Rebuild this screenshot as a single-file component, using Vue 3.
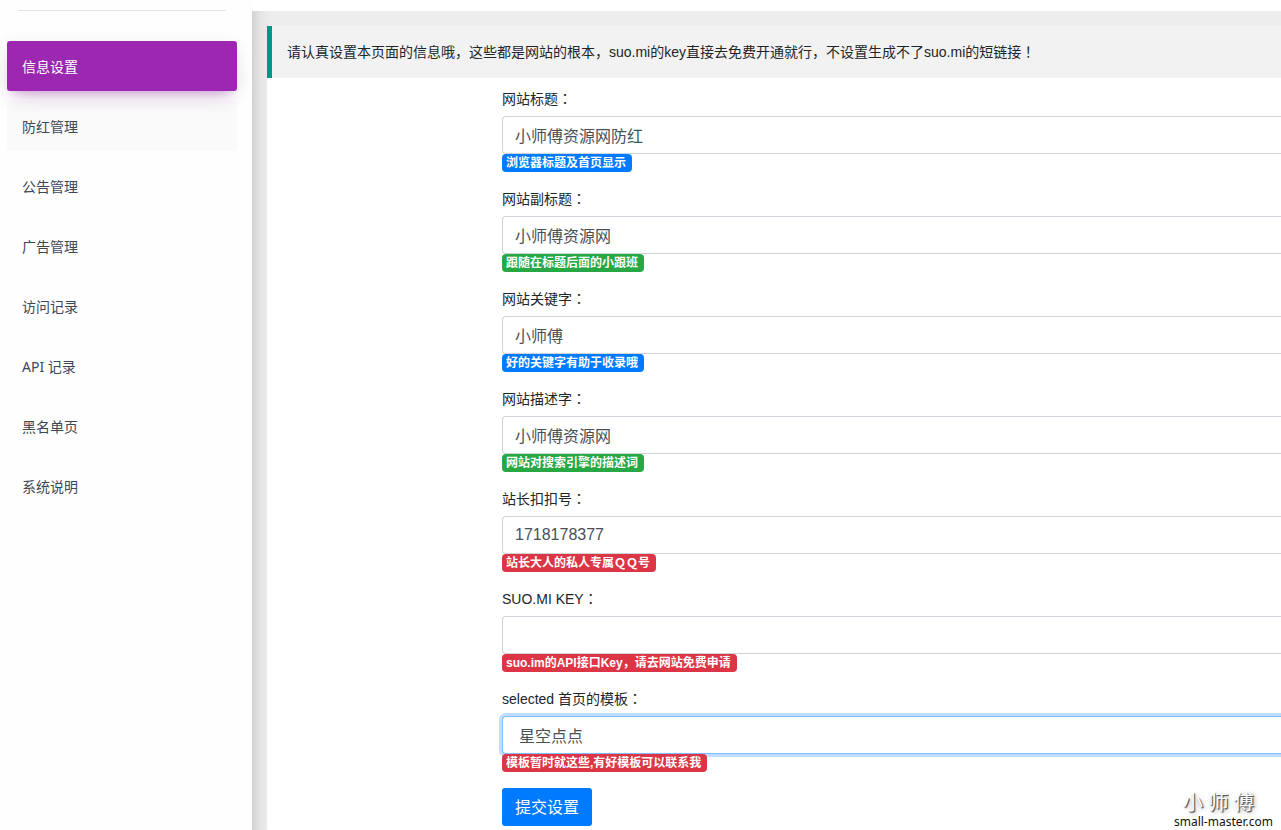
<script setup>
import { ref } from 'vue'

const menu = ['信息设置', '防红管理', '公告管理', '广告管理', '访问记录', 'API 记录', '黑名单页', '系统说明']

const fields = ref([
  { id: 'title', label: '网站标题', value: '小师傅资源网防红', hint: '浏览器标题及首页显示', tone: 'primary' },
  { id: 'subtitle', label: '网站副标题', value: '小师傅资源网', hint: '跟随在标题后面的小跟班', tone: 'success' },
  { id: 'keywords', label: '网站关键字', value: '小师傅', hint: '好的关键字有助于收录哦', tone: 'primary' },
  { id: 'description', label: '网站描述字', value: '小师傅资源网', hint: '网站对搜索引擎的描述词', tone: 'success' },
  { id: 'qq', label: '站长扣扣号', value: '1718178377', hint: '站长大人的私人专属ＱＱ号', tone: 'danger' },
  { id: 'key', label: 'SUO.MI KEY', value: '', hint: 'suo.im的API接口Key，请去网站免费申请', tone: 'danger' }
])
const template = ref('star')
</script>

<template>
  <div class="page">
    <aside class="sidebar">
      <nav class="menu">
        <a
          v-for="(item, i) in menu"
          :key="item"
          href="#"
          class="menu-item"
          :class="{ active: i === 0, hovered: i === 1 }"
        >{{ item }}</a>
      </nav>
    </aside>
    <main class="main">
      <p class="notice">请认真设置本页面的信息哦，这些都是网站的根本，suo.mi的key直接去免费开通就行，不设置生成不了suo.mi的短链接<span class="mark">！</span></p>
      <form class="form" @submit.prevent>
        <div v-for="f in fields" :key="f.id" class="group">
          <label :for="f.id">{{ f.label }}<span class="mark">：</span></label>
          <input :id="f.id" v-model="f.value" type="text" class="control" />
          <span class="badge" :class="f.tone">{{ f.hint }}</span>
        </div>
        <div class="group">
          <label for="template">selected 首页的模板<span class="mark">：</span></label>
          <select id="template" v-model="template" class="control picker">
            <option value="star">星空点点</option>
          </select>
          <span class="badge danger">模板暂时就这些,有好模板可以联系我</span>
        </div>
        <button type="submit" class="submit">提交设置</button>
      </form>
    </main>
    <div class="watermark">
      <span class="brand">小 师 傅</span>
      <span class="site">small-master.com</span>
    </div>
  </div>
</template>

<style>
body {
  margin: 0;
}
</style>

<style scoped>
* {
  box-sizing: border-box;
}
.page {
  position: relative;
  display: flex;
  min-height: 100vh;
  overflow: hidden;
  background: #fff;
  color: #212529;
  font: 14px/22px "Liberation Sans", "Noto Sans CJK SC", sans-serif;
}
.sidebar {
  position: relative;
  z-index: 1;
  flex: none;
  width: 252px;
  padding-top: 10px;
  background: #fefefe;
}
.menu {
  display: flex;
  flex-direction: column;
  gap: 10px;
  padding: 0 15px 0 7px;
  font-family: "Noto Sans", "Noto Sans CJK SC", sans-serif;
}
.menu::before {
  content: "";
  height: 1px;
  margin: 0 11px 20px;
  background: #e4e4e4;
}
.menu-item {
  height: 50px;
  padding: 0 15px;
  border-radius: 3px;
  color: #3c4858;
  line-height: 52px;
  text-decoration: none;
}
.menu-item.active {
  position: relative;
  background: #9c27b0;
  color: #fff;
  box-shadow: 0 12px 20px -10px rgba(156, 39, 176, 0.28), 0 4px 20px 0 rgba(0, 0, 0, 0.08), 0 7px 8px -5px rgba(156, 39, 176, 0.2);
}
.menu-item.hovered {
  background: #fafafa;
}
.main {
  flex: 1;
  min-width: 0;
  margin-top: 11px;
  padding: 15px 0 0 15px;
  background: linear-gradient(to right, #d2d2d2, #e6e6e6 9px, #ededed 20px);
}
.notice {
  margin: 0;
  padding: 15px;
  border-left: 5px solid #009688;
  background: #f2f2f2;
}
.form {
  min-height: calc(100vh - 78px);
  padding: 10px 0 4px 235px;
  background: #fff;
}
.mark {
  font-family: "Noto Sans CJK JP", sans-serif;
  line-height: 1;
}
.group {
  display: flex;
  flex-direction: column;
  align-items: flex-start;
  margin-bottom: 16px;
}
label {
  margin-bottom: 6px;
}
.control {
  width: 100%;
  height: 38px;
  padding: 0 12px;
  border: 1px solid #ced4da;
  border-right: 0;
  border-radius: 4px 0 0 4px;
  outline: 0;
  background: #fff;
  color: #495057;
  font: 16px/24px "Liberation Sans", "Noto Sans CJK SC", sans-serif;
}
.picker {
  appearance: none;
  padding: 3px 16px 0;
  border-color: #80bdff;
  box-shadow: 0 0 0 3px rgba(0, 123, 255, 0.25);
}
.badge {
  z-index: 1;
  height: 18px;
  padding: 0 6px 0 4px;
  border-radius: 4px;
  color: #fff;
  font-size: 12px;
  font-weight: 700;
  line-height: 18px;
  white-space: nowrap;
}
.primary {
  background: #007bff;
}
.success {
  background: #28a745;
}
.danger {
  background: #dc3545;
}
.submit {
  display: block;
  height: 38px;
  padding: 1px 13px 0;
  border: 0;
  border-radius: 3px;
  background: #007bff;
  color: #fff;
  font: 16px/38px "Liberation Sans", "Noto Sans CJK SC", sans-serif;
}
.watermark {
  position: absolute;
  right: 8px;
  bottom: 0;
  display: flex;
  flex-direction: column;
  color: #111;
}
.brand {
  padding-left: 9px;
  color: #fff;
  font-size: 20px;
  line-height: 20px;
  text-shadow: 1px 1px 1px #555, 1px 1px 1px #777, 2px 2px 5px #aaa;
}
.site {
  font-family: "Noto Sans", sans-serif;
  font-size: 12px;
  line-height: 17px;
}
</style>
